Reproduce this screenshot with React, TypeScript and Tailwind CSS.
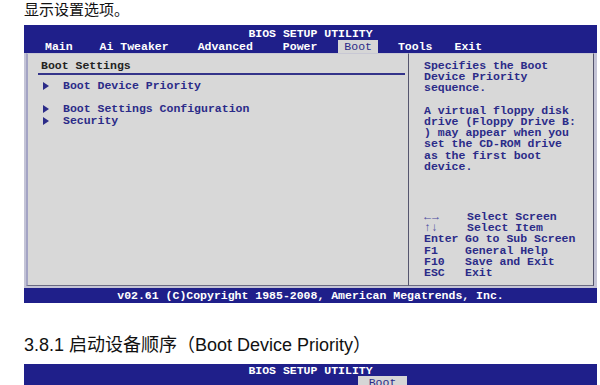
const mono = "font-['Liberation_Mono','Courier_New',monospace]";

const tabs = [
  { label: "Main", cls: "ml-[15px]" },
  { label: "Ai Tweaker", cls: "ml-[15px]" },
  { label: "Advanced", cls: "ml-[17px]" },
  { label: "Power", cls: "ml-[18px]" },
  { label: "Boot", cls: "ml-[15px]", active: true },
  { label: "Tools", cls: "ml-[14px]" },
  { label: "Exit", cls: "ml-[10px]" },
];

const items = [
  { label: "Boot Device Priority", gap: true },
  { label: "Boot Settings Configuration" },
  { label: "Security" },
];

const help = [
  "Specifies the Boot",
  "Device Priority",
  "sequence.",
  "",
  "A virtual floppy disk",
  "drive (Floppy Drive B:",
  ") may appear when you",
  "set the CD-ROM drive",
  "as the first boot",
  "device.",
];

const keys = [
  { k: "←→", v: "Select Screen", pad: "pl-[2px]", kc: "text-[#4a4aa0] tracking-[1px]" },
  { k: "↑↓", v: "Select Item", pad: "pl-[2px]", kc: "text-[#4a4aa0]" },
  { k: "Enter", v: "Go to Sub Screen", pad: "", kc: "" },
  { k: "F1", v: "General Help", pad: "", kc: "" },
  { k: "F10", v: "Save and Exit", pad: "", kc: "" },
  { k: "ESC", v: "Exit", pad: "", kc: "" },
];

function Arrow() {
  return (
    <svg width="8" height="8" viewBox="0 0 8 8" className="mt-[1px]">
      <polygon points="1,0 7,4 1,8" fill="#2b2b88" />
    </svg>
  );
}

export default function App() {
  return (
    <div className="w-[600px] h-[385px] overflow-hidden bg-white">
      <div className="pl-[24px] h-[20px] leading-[20px] -mt-[1px] text-[15px] text-[#111] font-['Noto_Sans_CJK_SC',sans-serif]">
        显示设置选项。
      </div>

      {/* first bios screen */}
      <div className={`ml-[24px] mt-[6px] w-[573px] bg-[#1f1f8a] ${mono} text-[11.5px]`}>
        <div className="h-[28px] pt-[3px]">
          <div className="h-[11px] leading-[11px] text-center text-white font-bold">
            BIOS SETUP UTILITY
          </div>
          <div className="flex h-[13px] mt-[1px]">
            {tabs.map((t) =>
              t.active ? (
                <span
                  key={t.label}
                  className={`${t.cls} px-[6px] leading-[13px] bg-[#d6d6d6] text-[#2b2b88]`}
                >
                  {t.label}
                </span>
              ) : (
                <span
                  key={t.label}
                  className={`${t.cls} px-[6px] leading-[13px] text-white font-bold`}
                >
                  {t.label}
                </span>
              )
            )}
          </div>
        </div>

        <div className="flex h-[235px] bg-[#c4c4d6] pl-[2px] pr-[3px] pb-[2px]">
          <div className="w-[383px] bg-[#d8d8d8] border-l-2 border-l-[#a4a4c4] border-r border-r-[#55556e] border-b border-b-[#6a6a82] border-t border-t-[#c8c8d4]">
            <div className="pt-[6px] pl-[13px] leading-[12px] text-[#222] font-bold">
              Boot Settings
            </div>
            <div className="ml-[10px] mr-[3px] mt-[1px] h-[2px] bg-[#34348a]" />
            <div className="mt-[5px] pl-[14px]">
              {items.map((it) => (
                <div key={it.label} className={it.gap ? "mb-[11.5px]" : ""}>
                  <div className="flex items-center h-[11.5px] leading-[11.5px] text-[#2b2b88] font-bold">
                    <span className="w-[21px] flex">
                      <Arrow />
                    </span>
                    {it.label}
                  </div>
                </div>
              ))}
            </div>
          </div>

          <div className="flex-1 bg-[#d8d8d8] border-r border-r-[#55556e] border-b border-b-[#6a6a82] border-t border-t-[#c8c8d4] pl-[15px] pt-[6px] text-[#2b2b88] font-bold">
            {help.map((l, i) => (
              <div key={i} className="h-[11.2px] leading-[11.2px] whitespace-pre">
                {l}
              </div>
            ))}
            <div className="mt-[39px]">
              {keys.map((k) => (
                <div key={k.k} className="flex h-[11.3px] leading-[11.3px] whitespace-pre">
                  <span className={`w-[41px] ${k.kc}`}>{k.k}</span>
                  <span className={k.pad}>{k.v}</span>
                </div>
              ))}
            </div>
          </div>
        </div>

        <div className="h-[15px] leading-[15px] text-center text-white font-bold">
          v02.61 (C)Copyright 1985-2008, American Megatrends, Inc.
        </div>
      </div>

      <div className="pl-[24px] mt-[30px] h-[24px] leading-[24px] text-[18px] text-[#111] font-['Liberation_Sans','Noto_Sans_CJK_SC',sans-serif]">
        3.8.1 启动设备顺序（Boot Device Priority）
      </div>

      {/* second bios screen, cut off */}
      <div className={`ml-[24px] mt-[7px] w-[573px] h-[40px] bg-[#1f1f8a] ${mono} text-[11.5px]`}>
        <div className="pt-[1px] h-[12px] leading-[11px] text-center text-white font-bold">
          BIOS SETUP UTILITY
        </div>
        <div className="flex">
          <span className="ml-[334px] w-[49px] text-center leading-[13px] bg-[#d6d6d6] text-[#2b2b88]">
            Boot
          </span>
        </div>
      </div>
    </div>
  );
}
